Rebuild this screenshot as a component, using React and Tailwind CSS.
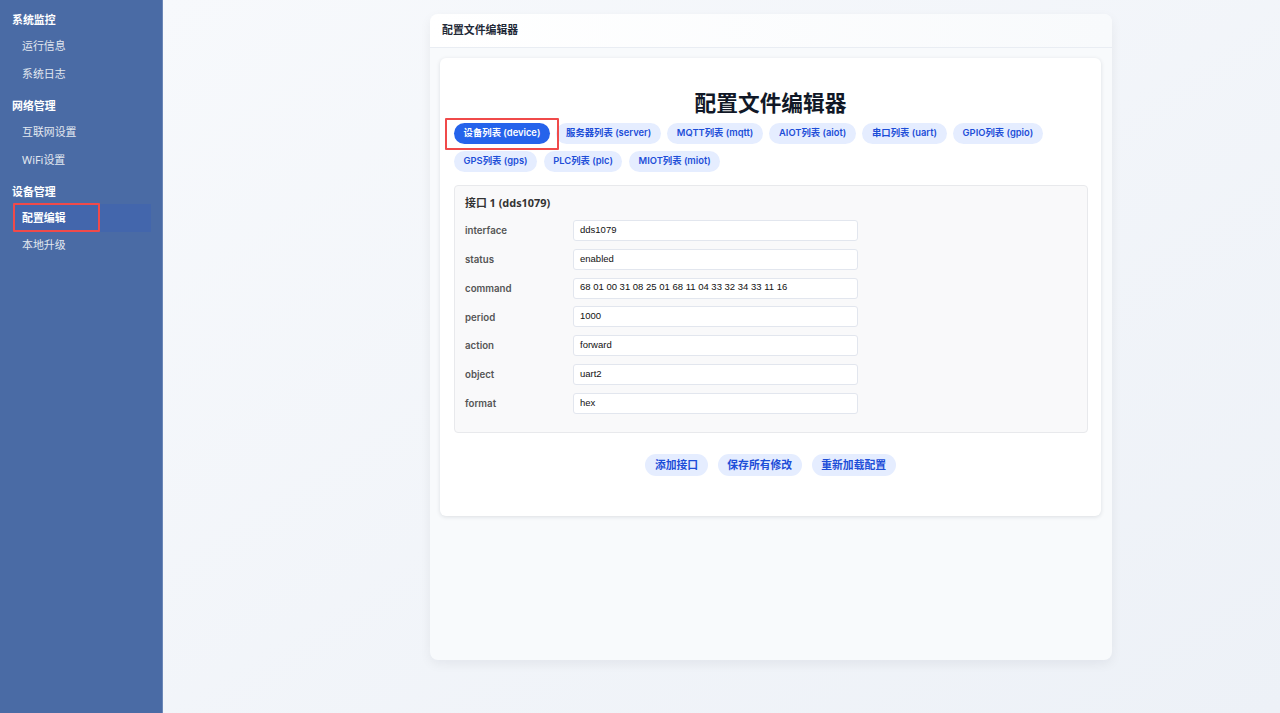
const F = '[font-family:"Noto_Sans","Noto_Sans_CJK_SC",sans-serif]';

function NavGroup({ title, items }) {
  return (
    <div className="mb-[4.4px]">
      <div className="h-[26px] pl-[12px] pt-[2px] flex items-center text-[10.9px] font-bold text-white">{title}</div>
      {items.map((it) => (
        <div
          key={it.t}
          className={`relative h-[27.8px] ml-[13px] w-[138px] pl-[9px] flex items-center text-[10.9px] ${it.active ? "bg-[#4366ac] font-bold text-white" : "text-[#e2e8f0]"}`}
        >
          {it.t}
          {it.active && <div className="absolute left-0 top-[-1px] w-[87px] h-[29px] border-[2px] border-[#f04a4a] rounded-[1px]" />}
        </div>
      ))}
    </div>
  );
}

function Pill({ children, active }) {
  return (
    <div
      className={`h-[21px] px-[9.6px] rounded-full flex items-center text-[9.35px] font-semibold whitespace-nowrap [font-family:Inter,"Noto_Sans_CJK_SC",sans-serif] ${active ? "bg-[#2563eb] text-white" : "bg-[#e5edff] text-[#1d4ed8]"}`}
    >
      {children}
    </div>
  );
}

function Row({ label, value }) {
  return (
    <div className="flex items-center h-[21px] mb-[7.8px]">
      <div className="w-[108px] pt-[2px] text-[9.7px] font-semibold text-[#555555] [font-family:Inter,sans-serif]">{label}</div>
      <div className="w-[285px] h-[21px] bg-white border border-[#e2e6ee] rounded-[3px] pl-[6px] pb-[1px] flex items-center text-[9.5px] text-[#111111] [font-family:'Liberation_Sans',sans-serif]">
        {value}
      </div>
    </div>
  );
}

function ActionBtn({ children }) {
  return (
    <div className="h-[22px] px-[9.6px] rounded-full bg-[#e5edff] text-[#1d4ed8] flex items-center text-[10.8px] font-semibold whitespace-nowrap">
      {children}
    </div>
  );
}

export default function App() {
  const tabs = ["服务器列表 (server)", "MQTT列表 (mqtt)", "AIOT列表 (aiot)", "串口列表 (uart)", "GPIO列表 (gpio)", "GPS列表 (gps)", "PLC列表 (plc)", "MIOT列表 (miot)"];
  const rows = [
    ["interface", "dds1079"],
    ["status", "enabled"],
    ["command", "68 01 00 31 08 25 01 68 11 04 33 32 34 33 11 16"],
    ["period", "1000"],
    ["action", "forward"],
    ["object", "uart2"],
    ["format", "hex"],
  ];
  return (
    <div className={`flex h-[713px] w-[1280px] overflow-hidden ${F}`}>
      <aside className="w-[163px] shrink-0 bg-[#4a6ba5] border-r border-[#6c88b8] pt-[6px]">
        <NavGroup title="系统监控" items={[{ t: "运行信息" }, { t: "系统日志" }]} />
        <NavGroup title="网络管理" items={[{ t: "互联网设置" }, { t: "WiFi设置" }]} />
        <NavGroup title="设备管理" items={[{ t: "配置编辑", active: true }, { t: "本地升级" }]} />
      </aside>
      <main className="flex-1 bg-gradient-to-br from-[#f7f9fc] to-[#edf1f7] pt-[14px] pl-[267px]">
        <div className="w-[682px] h-[646px] rounded-[8px] bg-[#f8fafc] shadow-[0_4px_12px_rgba(15,23,42,0.06)] overflow-hidden">
          <div className="h-[34px] bg-gradient-to-r from-white to-[#f8fafc] border-b border-[#e9edf3] pl-[12px] pb-[1px] flex items-center text-[10.9px] font-semibold text-[#1f2937]">
            配置文件编辑器
          </div>
          <div className="mt-[10px] ml-[10px] w-[661px] h-[458px] bg-white rounded-[6px] shadow-[0_1px_4px_rgba(15,23,42,0.12)] px-[14px] pt-[30px]">
            <h1 className="text-center text-[21.7px] leading-[30px] font-bold text-[#111827]">配置文件编辑器</h1>
            <div className="relative mt-[5px] flex flex-wrap gap-x-[6.5px] gap-y-[7px]">
              <div className="absolute left-[-9px] top-[-5px] w-[114px] h-[32px] border-[2px] border-[#f04a4a] rounded-[1px] z-10" />
              <Pill active>设备列表 (device)</Pill>
              {tabs.map((t) => <Pill key={t}>{t}</Pill>)}
            </div>
            <div className="mt-[13px] w-[634px] h-[248px] bg-[#f9f9fa] border border-[#e8e9ec] rounded-[4px] pl-[10px] pt-[10px]">
              <div className="h-[15px] mb-[9px] flex items-center text-[10.9px] font-bold text-[#333333]">接口 1 (dds1079)</div>
              {rows.map(([l, v]) => <Row key={l} label={l} value={v} />)}
            </div>
            <div className="mt-[21px] flex justify-center gap-[10px]">
              <ActionBtn>添加接口</ActionBtn>
              <ActionBtn>保存所有修改</ActionBtn>
              <ActionBtn>重新加载配置</ActionBtn>
            </div>
          </div>
        </div>
      </main>
    </div>
  );
}
